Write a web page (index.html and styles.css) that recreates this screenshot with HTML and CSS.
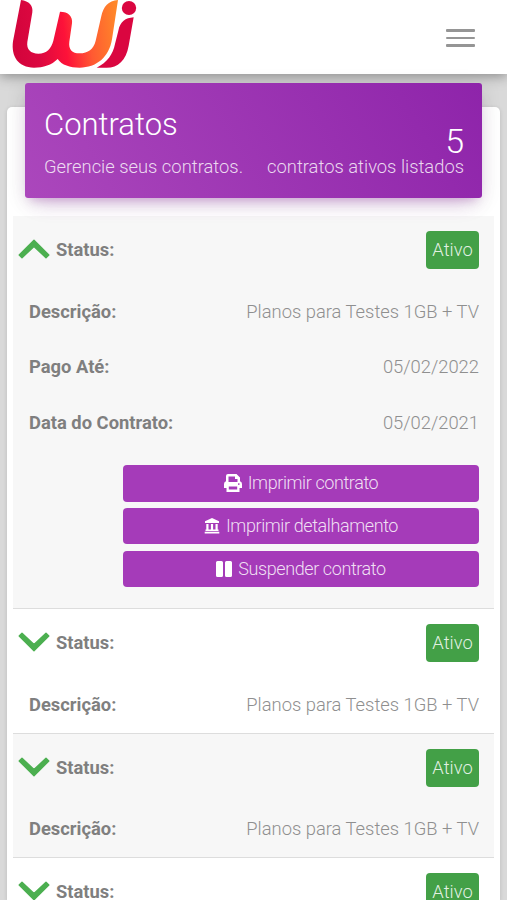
FILE: index.html
```html
<!DOCTYPE html>
<html lang="pt-BR">
<head>
<meta charset="utf-8">
<title>Contratos</title>
<link rel="stylesheet" href="styles.css">
</head>
<body>
<svg class="defs" width="0" height="0">
  <symbol id="chevron" viewBox="0 0 32 20"><path d="M4 1.300 16 12.500 28 1.300 30.800 4 16 18.700 1.200 4Z" fill="#4caf50" stroke="#4caf50" stroke-width="1.400" stroke-linejoin="round"/></symbol>
</svg>
<header class="topbar">
  <svg class="logo" viewBox="0 0 450 222" role="img" aria-label="Wi">
    <defs>
      <linearGradient id="w" gradientUnits="userSpaceOnUse" x1="40" y1="90" x2="350" y2="50">
        <stop offset="0" stop-color="#d3043c"/><stop offset=".22" stop-color="#dc0840"/><stop offset=".48" stop-color="#fd1239"/><stop offset=".72" stop-color="#ff5a32"/><stop offset="1" stop-color="#ff8729"/>
      </linearGradient>
    </defs>
    <path fill="url(#w)" d="M63 0C87 3 100 17 97 37L82 126C79 148 92 161 115 161C140 161 154 145 160 122L180 35C205 35 219 49 216 70L208 125C205 148 216 160 239 160C264 160 281 147 287 122L304 48C310 20 325 3 354 0L336 118C327 172 290 203 239 203C210 203 185 195 173 177C155 195 130 203 102 203C55 203 33 170 39 124Z"/>
    <path fill="#da0640" d="M401 52 386 137C378 181 354 203 320 203H290C322 187 339 163 345 132L355 92C361 64 376 54 401 52Z"/>
    <ellipse cx="387" cy="24" rx="21.500" ry="21" fill="#da0640"/>
  </svg>
  <div class="menu"><i></i><i></i><i></i></div>
</header>
<main class="card">
  <div class="hero">
    <div><h1>Contratos</h1><p>Gerencie seus contratos.</p></div>
    <div class="count"><strong>5</strong><p>contratos ativos listados</p></div>
  </div>
  <section class="list">
    <article class="item">
      <div class="row status"><svg class="chev up"><use href="#chevron"/></svg><b>Status:</b><span class="badge">Ativo</span></div>
      <div class="row"><b>Descrição:</b><span>Planos para Testes 1GB + TV</span></div>
      <div class="row"><b>Pago Até:</b><span>05/02/2022</span></div>
      <div class="row"><b>Data do Contrato:</b><span>05/02/2021</span></div>
      <div class="actions">
        <a class="btn"><svg width="18" height="18" viewBox="0 0 18 18"><path fill="#fff" fill-rule="evenodd" d="M4 0H12.500L16 3.500V7.200Q18 7.800 18 10V14H15.500V18H2.500V14H0V10Q0 7.800 2 7.200V2Q2 0 4 0ZM4.500 2.400V8H13.500V5H11V2.400ZM4.800 12.500V15.600H13.200V12.500ZM14.800 9.300A.8.8 0 1 0 14.810 9.300Z"/></svg><span>Imprimir contrato</span></a>
        <a class="btn"><svg width="16" height="16" viewBox="0 0 16 16"><path fill="#fff" d="M8 0 15 3.300V5H1V3.300ZM2.300 6H4.500V12H2.300ZM6.900 6H9.100V12H6.900ZM11.500 6H13.700V12H11.500ZM1.500 11.500H14.500V13H1.500ZM.7 13.700H15.300V15.500H.7Z"/></svg><span>Imprimir detalhamento</span></a>
        <a class="btn"><svg width="16" height="16" viewBox="0 0 16 16"><path fill="#fff" d="M1.500 0H5.500Q7 0 7 1.500V14.500Q7 16 5.500 16H1.500Q0 16 0 14.500V1.500Q0 0 1.500 0ZM10.500 0H14.500Q16 0 16 1.500V14.500Q16 16 14.500 16H10.500Q9 16 9 14.500V1.500Q9 0 10.500 0Z"/></svg><span>Suspender contrato</span></a>
      </div>
    </article>
    <article class="item">
      <div class="row status"><svg class="chev"><use href="#chevron"/></svg><b>Status:</b><span class="badge">Ativo</span></div>
      <div class="row"><b>Descrição:</b><span>Planos para Testes 1GB + TV</span></div>
    </article>
    <article class="item">
      <div class="row status"><svg class="chev"><use href="#chevron"/></svg><b>Status:</b><span class="badge">Ativo</span></div>
      <div class="row"><b>Descrição:</b><span>Planos para Testes 1GB + TV</span></div>
    </article>
    <article class="item">
      <div class="row status"><svg class="chev"><use href="#chevron"/></svg><b>Status:</b><span class="badge">Ativo</span></div>
    </article>
  </section>
</main>
</body>
</html>
```
FILE: styles.css
```css
* { box-sizing: border-box; }
html, body { height: 900px; overflow: hidden; }
body {
  margin: 0;
  background: #d9d9d9;
  color: #8f8f8f;
  font: 300 18.370px/24px Roboto, sans-serif;
}
h1, p { margin: 0; font-weight: 300; }
.defs { display: none; }
.topbar {
  position: relative;
  display: flex;
  justify-content: space-between;
  height: 74px;
  padding-right: 32px;
  background: #fff;
  box-shadow: 0 2px 12px rgba(0, 0, 0, .38);
}
.logo { width: 150px; height: 74px; }
.menu {
  display: flex;
  flex-direction: column;
  gap: 5px;
  padding-top: 29px;
}
.menu i { width: 29px; height: 2.500px; border-radius: 1px; background: #959595; }
.card {
  display: flow-root;
  height: 793px;
  margin: 33px 7px 0;
  padding: 0 6px;
  border-radius: 5px 5px 0 0;
  background: #fff;
  box-shadow: 0 1px 4px rgba(0, 0, 0, .14);
}
.hero {
  position: relative;
  display: flex;
  justify-content: space-between;
  height: 115px;
  margin: -24px 12px 18px;
  padding: 23px 18px 0 19px;
  border-radius: 3px;
  background: linear-gradient(60deg, #ab47bc, #8e24aa);
  box-shadow: 0 12px 20px -10px rgba(156, 39, 176, .28), 0 4px 20px rgba(0, 0, 0, .12), 0 7px 8px -5px rgba(156, 39, 176, .2);
  color: rgba(255, 255, 255, .82);
}
.hero h1 { height: 49px; color: #fff; font-size: 31px; line-height: 38px; }
.count { padding-top: 15px; text-align: right; }
.count strong { display: block; height: 34px; color: #fff; font-size: 34px; font-weight: 300; line-height: 40px; }
.item { border-bottom: 1px solid #ddd; }
.item:nth-child(odd) { background: #f7f7f7; }
.row {
  display: flex;
  align-items: center;
  justify-content: space-between;
  height: 55.500px;
  padding: 0 15px 0 16px;
}
.row b { color: #7f7f7f; font-weight: 700; }
.status { height: 68px; padding-left: 5px; }
.chev { width: 32px; height: 20px; margin: -2px 6px 0 0; }
.up { transform: rotate(180deg); }
.badge {
  width: 53px;
  height: 38px;
  margin-left: auto;
  border-radius: 4px;
  background: #43a047;
  color: rgba(255, 255, 255, .86);
  line-height: 38px;
  text-align: center;
}
.actions {
  display: flex;
  flex-direction: column;
  gap: 6.200px;
  padding: 14.500px 15px 21px 110px;
}
.btn {
  display: flex;
  align-items: center;
  justify-content: center;
  gap: 6px;
  height: 36.600px;
  border-radius: 4px;
  background: #a53bb9;
  color: rgba(255, 255, 255, .85);
  font-size: 18px;
  letter-spacing: -.4px;
}
```
